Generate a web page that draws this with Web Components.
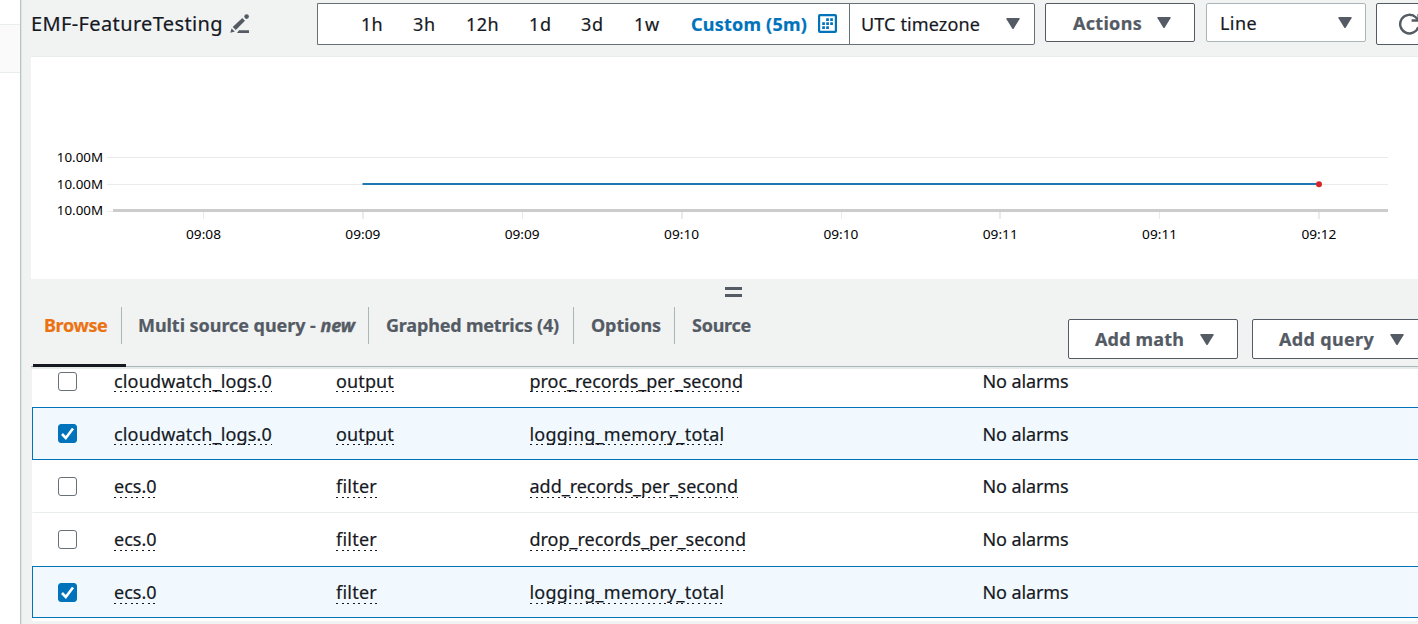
<!DOCTYPE html>
<html lang="en">
<head>
<meta charset="utf-8">
<title>CloudWatch metrics</title>
<style>
html,body{margin:0;height:100%;overflow:hidden;background:#f1f3f3}
body{font:18px/24px "Noto Sans","Open Sans",sans-serif;color:#16191f;-webkit-text-stroke:.2px}
</style>
</head>
<body>
<cw-app></cw-app>
<script>
const define = (name, html, setup) => customElements.define(name, class extends HTMLElement {
  connectedCallback() {
    if (this.shadowRoot) return;
    const t = document.createElement('template');
    t.innerHTML = html;
    this.attachShadow({mode: 'open'}).append(t.content.cloneNode(true));
    if (setup) setup(this, this.shadowRoot);
  }
});

/* Label that tracks its letters to fill a set width. */
define('fit-text', `<style>
:host{display:block;flex:none;white-space:pre}
span{display:inline-block;white-space:pre}
</style><span><slot></slot></span>`, (el, root) => {
  const w = +el.getAttribute('w'), s = root.querySelector('span');
  el.style.width = w + 'px';
  const n = el.textContent.length;
  s.style.letterSpacing = (w - s.getBoundingClientRect().width) / n + 'px';
});

define('cw-caret', `<style>:host{display:block;flex:none;width:14px;height:11px}svg{display:block}</style>
<svg width="14" height="11" viewBox="0 0 14 11"><path d="M1 0H13Q14 .2 13.5 1.2L7.8 10.4Q7 11.4 6.2 10.4L.5 1.2Q0 .2 1 0Z" fill="#545b64"/></svg>`);

define('cw-button', `<style>
:host{display:flex;flex:none;box-sizing:border-box;background:#fff;border:1px solid #545b64;border-radius:2px;color:#545b64;font-weight:700;align-items:center}
:host([kind=select]){border-color:#aab7b8;color:#16191f;font-weight:400}
</style><slot></slot>`);

define('cw-range', `<style>
:host{display:flex;flex:none;box-sizing:border-box;width:718px;height:42px;background:#fff;border:1px solid #687078;border-radius:0 2px 2px 0}
.r{display:flex;width:532px;box-sizing:border-box;padding:8px 0 0 43px;border-right:1px solid #687078}
.z{display:flex;padding:8px 0 0 11px}
.b{font-weight:700;color:#0073bb}
svg{flex:none;margin:2px 0 0 11px}
cw-caret{margin:6px 0 0 26px}
</style>
<div class="r"><fit-text w="22">1h</fit-text><fit-text w="23" style="margin-left:30px">3h</fit-text><fit-text w="33" style="margin-left:30px">12h</fit-text><fit-text w="23" style="margin-left:30px">1d</fit-text><fit-text w="23" style="margin-left:29px">3d</fit-text><fit-text w="26" style="margin-left:30px">1w</fit-text><fit-text class="b" w="116" style="margin-left:31px">Custom (5m)</fit-text>
<svg width="19" height="19" viewBox="0 0 19 19"><rect x="1.1" y="1.1" width="16.8" height="16.8" rx=".8" fill="none" stroke="#0073bb" stroke-width="2.2"/><path fill="#0073bb" d="M8.2 4.2h2.7v2.7H8.2zM12.2 4.2h2.7v2.7h-2.7zM4.2 8.2h2.7v2.7H4.2zM8.2 8.2h2.7v2.7H8.2zM12.2 8.2h2.7v2.7h-2.7zM4.2 12.2h2.7v2.7H4.2zM8.2 12.2h2.7v2.7H8.2z"/></svg></div>
<div class="z"><fit-text w="119">UTC timezone</fit-text><cw-caret></cw-caret></div>`);

define('cw-toolbar', `<style>
:host{display:flex;height:56px;box-sizing:border-box;padding:3px 0 0 8px;align-items:flex-start}
.t{font-size:20px;line-height:26px;margin-top:8px}
.pen{flex:none;margin:11px 0 0 7px}
cw-range{margin-left:67px}
cw-button{height:39px;margin-left:10px}
</style>
<fit-text class="t" w="192">EMF-FeatureTesting</fit-text>
<svg class="pen" width="20" height="19" viewBox="0 0 20 19" fill="#545b64"><path d="M9 16.2H19V19H7z"/><path d="M.3 18.8L1.5 14.4 4.9 17.6z"/><path d="M2.7 13.1L12.3 4l2.7 2.7L5.8 16z"/><circle cx="16.6" cy="2.6" r="2.3"/></svg>
<cw-range></cw-range>
<cw-button style="width:150px"><fit-text w="69" style="margin-left:27px">Actions</fit-text><cw-caret style="margin-left:15px"></cw-caret></cw-button>
<cw-button kind="select" style="width:160px;margin-left:11px"><fit-text w="37" style="margin-left:13px">Line</fit-text><cw-caret style="margin-left:81px"></cw-caret></cw-button>
<cw-button style="width:60px;height:42px"><svg style="margin-left:21px" width="23" height="23" viewBox="0 0 23 23" fill="none" stroke="#545b64" stroke-width="2.4"><path d="M20.3 14A9.3 9.3 0 1 1 18 4.5L20.2 7"/><path d="M20.6 1v6.5h-7"/></svg></cw-button>`);

define('cw-chart', `<style>
:host{display:block;margin-left:8px;height:223px;box-sizing:border-box;background:#fff;border-top:1px solid #eaeded}
svg{display:block;font-size:13px}
</style><svg width="1387" height="222" viewBox="31 57 1387 222"></svg>`, (el, root) => {
  let s = '<g fill="#eaeaea"><path d="M107 157h1281v1H107zM107 184h1281v1H107zM107 211h8v1h-8z"/>';
  [203, 362, 522, 681, 841, 999, 1159, 1318].forEach((x, i) => s += '<rect x="' + x + '" y="212" width="' + (i % 2 ? 2 : 1) + '" height="7"/>');
  s += '</g><path fill="#ccc" d="M113 209h1275v3H113z"/><path fill="#1f77b4" d="M362.5 183H1318v2H362.5z"/><circle cx="1319" cy="184.3" r="3" fill="#d62728"/><g fill="#000" stroke="none">';
  [162, 189, 215].forEach(y => s += '<text x="56.8" y="' + y + '" textLength="46.2" lengthAdjust="spacingAndGlyphs">10.00M</text>');
  ['09:08', '09:09', '09:09', '09:10', '09:10', '09:11', '09:11', '09:12'].forEach((t, i) => s += '<text x="' + (186 + 159.35 * i) + '" y="239" textLength="35" lengthAdjust="spacingAndGlyphs">' + t + '</text>');
  root.querySelector('svg').innerHTML = s + '</g>';
});

define('cw-tabs', `<style>
:host{display:flex;box-sizing:border-box;height:90px;margin-left:8px;padding:0 0 0 2px;border-bottom:2px solid #e6eaea;position:relative;box-shadow:inset 0 -1px #aab7b8;font-weight:700;color:#545b64;align-items:flex-start}
.tab{box-sizing:border-box;height:37px;margin-top:28px;padding:6px 0 0 17px;border-left:1px solid #aab7b8}
.on{color:#ec7211;border:0;padding-left:11px;width:88px;height:60px;padding-right:0}
.bar{position:absolute;left:2px;bottom:0;width:93px;height:3px;background:#16191f}
.h{position:absolute;left:694px;top:8px;width:17px;height:4px;border-top:3px solid #545b64;border-bottom:3px solid #545b64}
.acts{display:flex;position:absolute;left:1037px;top:40px;gap:14px}
cw-button{height:40px;width:170px}
i{font-style:italic;-webkit-text-stroke:.4px}
</style>
<div class="tab on"><fit-text w="63.5">Browse</fit-text></div>
<div class="tab" style="width:247px;padding-left:16px"><fit-text w="217">Multi source query - <i>new</i></fit-text></div>
<div class="tab" style="width:205px"><fit-text w="173">Graphed metrics (4)</fit-text></div>
<div class="tab" style="width:101px"><fit-text w="70">Options</fit-text></div>
<div class="tab"><fit-text w="59">Source</fit-text></div>
<div class="bar"></div><div class="h"></div>
<div class="acts"><cw-button><fit-text w="89" style="margin-left:26px">Add math</fit-text><cw-caret style="margin-left:16px"></cw-caret></cw-button>
<cw-button><fit-text w="95" style="margin-left:26px">Add query</fit-text><cw-caret style="margin-left:16px"></cw-caret></cw-button></div>`);

define('cw-check', `<style>
:host{display:block;box-sizing:border-box;width:19px;height:19px;border:1.5px solid #687078;border-radius:3px;background:#fff}
:host([on]){background:#0073bb;border-color:#0073bb}
svg{display:none}:host([on]) svg{display:block;margin:-1px}
</style><svg width="19" height="19" viewBox="0 0 19 19"><path d="M4 10l3.8 4L15 4.5" fill="none" stroke="#fff" stroke-width="2.6"/></svg>`);

define('cw-row', `<style>
:host{display:grid;grid-template-columns:25px 56px 222px 193.5px 453px 1fr;box-sizing:border-box;height:53px;border:1px solid transparent;border-bottom-color:#eaeded;border-right:0;background:#fff}
:host([on]){background:#f1f9ff;border-color:#0073bb}
cw-check{grid-column:2;margin-top:var(--check-top,16px)}
fit-text{margin-top:var(--text-top,13px)}
fit-text.u{height:var(--line-h,24px);background:repeating-linear-gradient(90deg,#16191f 0 2px,transparent 2px 5.6px) 0 100%/100% 1px no-repeat}
</style>`, (el, root) => {
  const c = el.getAttribute('cells').split('|').map(x => x.split(','));
  root.innerHTML += (el.hasAttribute('on') ? '<cw-check on></cw-check>' : '<cw-check></cw-check>') +
    c.map(([t, w]) => '<fit-text class="u" w="' + w + '">' + t + '</fit-text>').join('') + '<fit-text w="86">No alarms</fit-text>';
});

define('cw-table', `<style>
:host{display:block;margin-left:9px;height:252px;background:#fff;overflow:hidden}
.first{margin-top:-15px;--check-top:17px}
.first,.second{--text-top:14px;--line-h:23px}
</style>
<cw-row class="first" style="border-bottom-color:transparent" cells="cloudwatch_logs.0,158|output,58|proc_records_per_second,213.5"></cw-row>
<cw-row class="second" on cells="cloudwatch_logs.0,158|output,58|logging_memory_total,195"></cw-row>
<cw-row cells="ecs.0,42.5|filter,41|add_records_per_second,208.5"></cw-row>
<cw-row style="border-bottom-color:transparent" cells="ecs.0,42.5|filter,41|drop_records_per_second,216.5"></cw-row>
<cw-row on style="height:52px" cells="ecs.0,42.5|filter,41|logging_memory_total,195"></cw-row>`);

define('cw-side', `<style>
:host{display:block;flex:none;width:20px;background:#fff;border-right:1px solid #b8c3c5;box-shadow:1px 0 #e0e5e6}
.a{height:24px}.b{height:47px;background:#fafafa;border:solid #eaeded;border-width:1px 0}
</style><div class="a"></div><div class="b"></div>`);

define('cw-app', `<style>
:host{display:flex;height:624px;overflow:hidden}
main{flex:none;width:1395px;margin-left:2px}
</style><cw-side></cw-side><main><cw-toolbar></cw-toolbar><cw-chart></cw-chart><cw-tabs></cw-tabs><cw-table></cw-table></main>`);
</script>
</body>
</html>
